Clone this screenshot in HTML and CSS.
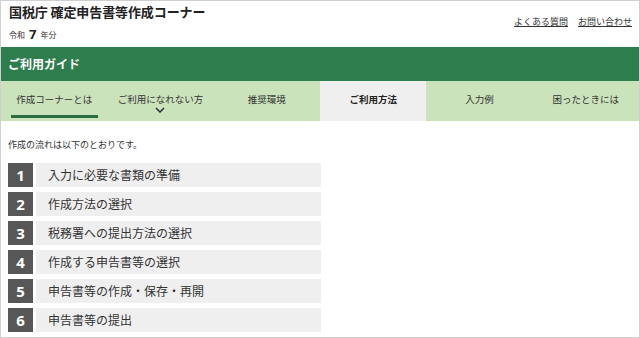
FILE: index.html
```html
<!DOCTYPE html>
<html lang="ja">
<head>
<meta charset="utf-8">
<title>ご利用ガイド</title>
<link rel="stylesheet" href="styles.css">
</head>
<body>
<div class="frame">
  <header class="header">
    <div class="brand">
      <div class="title">国税庁 確定申告書等作成コーナー</div>
      <div class="year"><span>令和</span><b class="year-num">7</b><span>年分</span></div>
    </div>
    <nav class="links">
      <a href="#">よくある質問</a>
      <a href="#">お問い合わせ</a>
    </nav>
  </header>
  <div class="guide-bar">ご利用ガイド</div>
  <nav class="tabs">
    <a class="tab tab-current" href="#"><span>作成コーナーとは</span></a>
    <a class="tab" href="#"><span>ご利用になれない方</span>
      <svg class="chev" width="10" height="6" viewBox="0 0 10 6"><path d="M1 1 L5 5 L9 1" fill="none" stroke="#333" stroke-width="1.6"/></svg>
    </a>
    <a class="tab" href="#"><span>推奨環境</span></a>
    <a class="tab tab-active" href="#"><span>ご利用方法</span></a>
    <a class="tab" href="#"><span>入力例</span></a>
    <a class="tab" href="#"><span>困ったときには</span></a>
  </nav>
  <main class="main">
    <p class="intro">作成の流れは以下のとおりです。</p>
    <ol class="steps">
      <li class="step"><span class="num">1</span><span class="label">入力に必要な書類の準備</span></li>
      <li class="step"><span class="num">2</span><span class="label">作成方法の選択</span></li>
      <li class="step"><span class="num">3</span><span class="label">税務署への提出方法の選択</span></li>
      <li class="step"><span class="num">4</span><span class="label">作成する申告書等の選択</span></li>
      <li class="step"><span class="num">5</span><span class="label">申告書等の作成・保存・再開</span></li>
      <li class="step"><span class="num">6</span><span class="label">申告書等の提出</span></li>
    </ol>
  </main>
</div>
</body>
</html>
```

FILE: styles.css
```css
* { box-sizing: border-box; }
html, body { margin: 0; padding: 0; background: #fff; }
body {
  font-family: "Noto Sans CJK JP", "Noto Sans", sans-serif;
  color: #333;
}
.frame {
  width: 640px;
  height: 338px;
  border: 1px solid #cfcfcf;
  overflow: hidden;
  display: flex;
  flex-direction: column;
}
.header {
  height: 46px;
  display: flex;
  justify-content: space-between;
  align-items: flex-start;
}
.brand { padding: 3px 0 0 8px; }
.title {
  font-size: 13px;
  line-height: 16px;
  font-weight: 700;
  color: #222;
  letter-spacing: -0.1px;
}
.year {
  margin-top: 7px;
  height: 14px;
  display: flex;
  align-items: center;
  font-size: 8px;
  color: #333;
  gap: 4px;
}
.year-num {
  font-family: "Noto Sans", sans-serif;
  font-size: 13px;
  font-weight: 700;
  color: #222;
}
.links {
  display: flex;
  gap: 10px;
  padding: 15px 7px 0 0;
  font-size: 9px;
  line-height: 12px;
}
.links a { color: #333; text-decoration: underline; }
.guide-bar {
  height: 34px;
  background: #2e7d4d;
  color: #fff;
  font-size: 12px;
  font-weight: 700;
  line-height: 34px;
  padding-left: 7px;
}
.tabs {
  height: 40px;
  display: grid;
  grid-template-columns: repeat(6, 1fr);
  background: #cbe3bb;
}
.tab {
  display: flex;
  flex-direction: column;
  align-items: center;
  padding-top: 12px;
  font-size: 9.5px;
  line-height: 12px;
  color: #333;
  text-decoration: none;
}
.tab-active {
  background: #efefef;
  font-weight: 700;
  color: #222;
}
.tab-current::after {
  content: "";
  margin-top: auto;
  margin-bottom: 3px;
  width: 87px;
  height: 3px;
  background: #2b6c40;
}
.chev { margin-top: 2px; }
.main { padding: 17px 0 0 7px; }
.intro {
  margin: 0;
  font-size: 9px;
  line-height: 14px;
  color: #333;
}
.steps {
  list-style: none;
  margin: 11px 0 0;
  padding: 0;
  width: 313px;
  display: flex;
  flex-direction: column;
  gap: 5px;
}
.step {
  height: 24px;
  display: flex;
  gap: 3px;
}
.num {
  width: 25px;
  background: #575757;
  color: #fff;
  font-family: "Noto Sans", sans-serif;
  font-weight: 700;
  font-size: 15px;
  display: flex;
  align-items: center;
  justify-content: center;
}
.label {
  flex: 1;
  background: #efefef;
  font-size: 12px;
  line-height: 24px;
  padding-left: 12px;
  color: #333;
}
```
